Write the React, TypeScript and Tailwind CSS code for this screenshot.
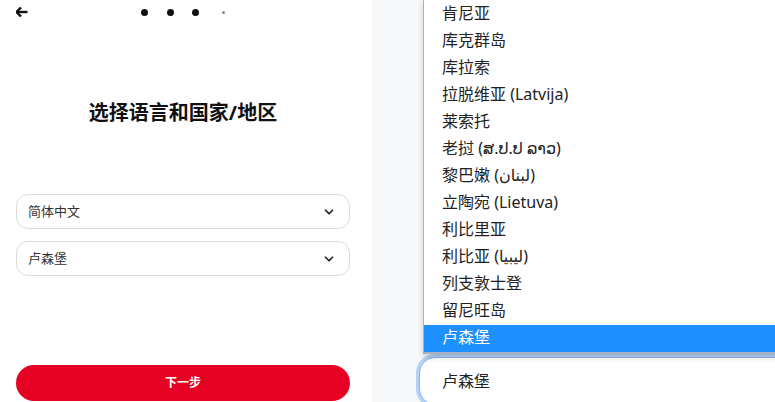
import { ChevronDown } from "lucide-react";

const FONT = "font-['Noto_Sans','Noto_Sans_CJK_SC','DejaVu_Sans',sans-serif]";

const COUNTRIES = [
  "肯尼亚",
  "库克群岛",
  "库拉索",
  "拉脱维亚 (Latvija)",
  "莱索托",
  "老挝 (ສ.ປ.ປ ລາວ)",
  "黎巴嫩 (لبنان)",
  "立陶宛 (Lietuva)",
  "利比里亚",
  "利比亚 (ليبيا)",
  "列支敦士登",
  "留尼旺岛",
  "卢森堡",
];

function SelectBox({ value }: { value: string }) {
  return (
    <div className="flex h-[35px] items-center justify-between rounded-[12px] border border-[#dcdcdc] bg-white pl-[11px] pr-[13px]">
      <span className="text-[13px] text-[#333]">{value}</span>
      <ChevronDown className="h-[14px] w-[14px] text-[#222]" strokeWidth={3} />
    </div>
  );
}

export default function App() {
  return (
    <div className={`flex h-[402px] w-[775px] overflow-hidden bg-white ${FONT}`}>
      {/* Left: form */}
      <div className="flex w-[372px] shrink-0 flex-col pl-4 pr-[22px]">
        <div className="grid h-[24px] grid-cols-[1fr_auto_1fr] items-center">
          <svg width="12" height="10" viewBox="0 0 12 10">
            <path d="M5 0.5 L0.5 5 L5 9.5" fill="none" stroke="#111" strokeWidth="2.4" strokeLinejoin="round" />
            <path d="M1.5 5 H11.5" stroke="#111" strokeWidth="2.4" />
          </svg>
          <div className="flex items-center">
            <span className="h-[7px] w-[7px] rounded-full bg-[#111]" />
            <span className="ml-[18.5px] h-[7px] w-[7px] rounded-full bg-[#111]" />
            <span className="ml-[18.5px] h-[7px] w-[7px] rounded-full bg-[#111]" />
            <span className="ml-[22.5px] h-[3px] w-[3px] rounded-full bg-[#888]" />
          </div>
          <div />
        </div>

        <h1 className="mt-[75px] text-center text-[20px] font-bold leading-[28px] text-[#111]">
          选择语言和国家/地区
        </h1>

        <div className="mt-[67px] flex flex-col gap-3">
          <SelectBox value="简体中文" />
          <SelectBox value="卢森堡" />
        </div>

        <button className="mt-[89px] h-[36px] rounded-full bg-[#e60023] text-[12px] font-bold text-white">
          下一步
        </button>
      </div>

      {/* Right: native select popup */}
      <div className="relative flex-1 bg-[#f7f8fa]">
        <div className="ml-[47px] mt-[357px] flex h-12 w-[400px] items-center rounded-[16px] border border-[#8db6ec] bg-white pl-[22px] ring-[3px] ring-[#b5d2f6]">
          <span className="text-[16px] text-[#222]">卢森堡</span>
        </div>

        <ul className="absolute left-[51px] top-0 w-[380px] border-b-2 border-l border-[#a8b3bf] bg-white pt-[1px] shadow-[0_3px_6px_rgba(0,0,0,0.18)]">
          {COUNTRIES.map((c, i) => {
            const selected = i === COUNTRIES.length - 1;
            return (
              <li
                key={c}
                className={`flex h-[27px] items-center pl-[18px] text-[16px] leading-none ${
                  selected ? "bg-[#1e90ff] text-white" : "text-[#222]"
                }`}
              >
                <span className="-mt-[3px]">{c}</span>
              </li>
            );
          })}
        </ul>
      </div>
    </div>
  );
}
